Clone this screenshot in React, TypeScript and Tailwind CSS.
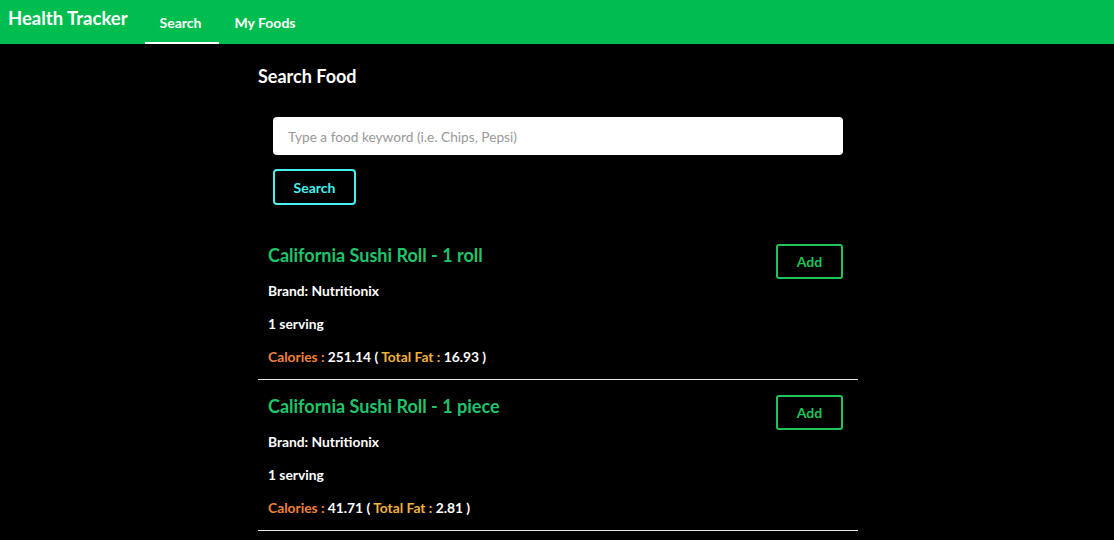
import React, { useState } from 'react';

type Food = {
  name: string;
  brand: string;
  serving: string;
  calories: string;
  fat: string;
};

const foods: Food[] = [
  { name: 'California Sushi Roll - 1 roll', brand: 'Nutritionix', serving: '1 serving', calories: '251.14', fat: '16.93' },
  { name: 'California Sushi Roll - 1 piece', brand: 'Nutritionix', serving: '1 serving', calories: '41.71', fat: '2.81' },
];

const FoodItem: React.FC<{ food: Food }> = ({ food }) => (
  <div className="border-b border-[#e6e6e6] pl-[10px] pr-[15px] pt-[14px] pb-[12px]">
    <div className="flex items-start justify-between">
      <h3 className="text-[18px] leading-[24px] font-bold text-[#1fc46b]">{food.name}</h3>
      <button className="mt-[1px] w-[67px] h-[35px] rounded-[3px] border-2 border-[#1ec45a] text-[14px] font-bold text-[#1ec45a]">
        Add
      </button>
    </div>
    <p className="mt-[2px] text-[13.8px] leading-[20px] font-bold text-white">Brand: {food.brand}</p>
    <p className="mt-[13px] text-[13.8px] leading-[20px] font-bold text-white">{food.serving}</p>
    <p className="mt-[13px] text-[13.8px] leading-[20px] font-bold text-white">
      <span className="text-[#f2813b]">Calories : </span>
      {food.calories} ( <span className="text-[#f1b23a]">Total Fat : </span>
      {food.fat} )
    </p>
  </div>
);

const App: React.FC = () => {
  const [query, setQuery] = useState('');

  return (
    <div className="min-h-[540px] bg-black font-['Lato','Liberation_Sans',sans-serif]">
      <nav className="h-[44px] bg-[#00bd4f] flex items-stretch">
        <div className="pl-[8px] pr-[17px] pt-[6px] text-[18.5px] font-bold text-white leading-[24px]">Health Tracker</div>
        <a className="pl-[15px] pr-[17px] flex items-center pt-[2px] text-[14px] font-bold text-white border-b-2 border-white">Search</a>
        <a className="px-[16px] flex items-center text-[14px] font-bold text-white">My Foods</a>
      </nav>

      <main className="w-[600px] ml-[258px]">
        <h2 className="pt-[22px] text-[18px] leading-[20px] font-bold text-white">Search Food</h2>

        <div className="px-[15px] mt-[31px]">
          <input
            value={query}
            onChange={(e) => setQuery(e.target.value)}
            placeholder="Type a food keyword (i.e. Chips, Pepsi)"
            className="w-full h-[38px] rounded-[4px] bg-white px-[15px] text-[13.7px] text-[#333] placeholder:text-[#999] outline-none"
          />
          <button className="mt-[14px] w-[83px] h-[36px] rounded-[4px] border-2 border-[#44f2f0] text-[14px] font-bold text-[#44f2f0]">
            Search
          </button>
        </div>

        <div className="mt-[24px]">
          {foods.map((f) => (
            <FoodItem key={f.name} food={f} />
          ))}
        </div>
      </main>
    </div>
  );
};

export default App;
